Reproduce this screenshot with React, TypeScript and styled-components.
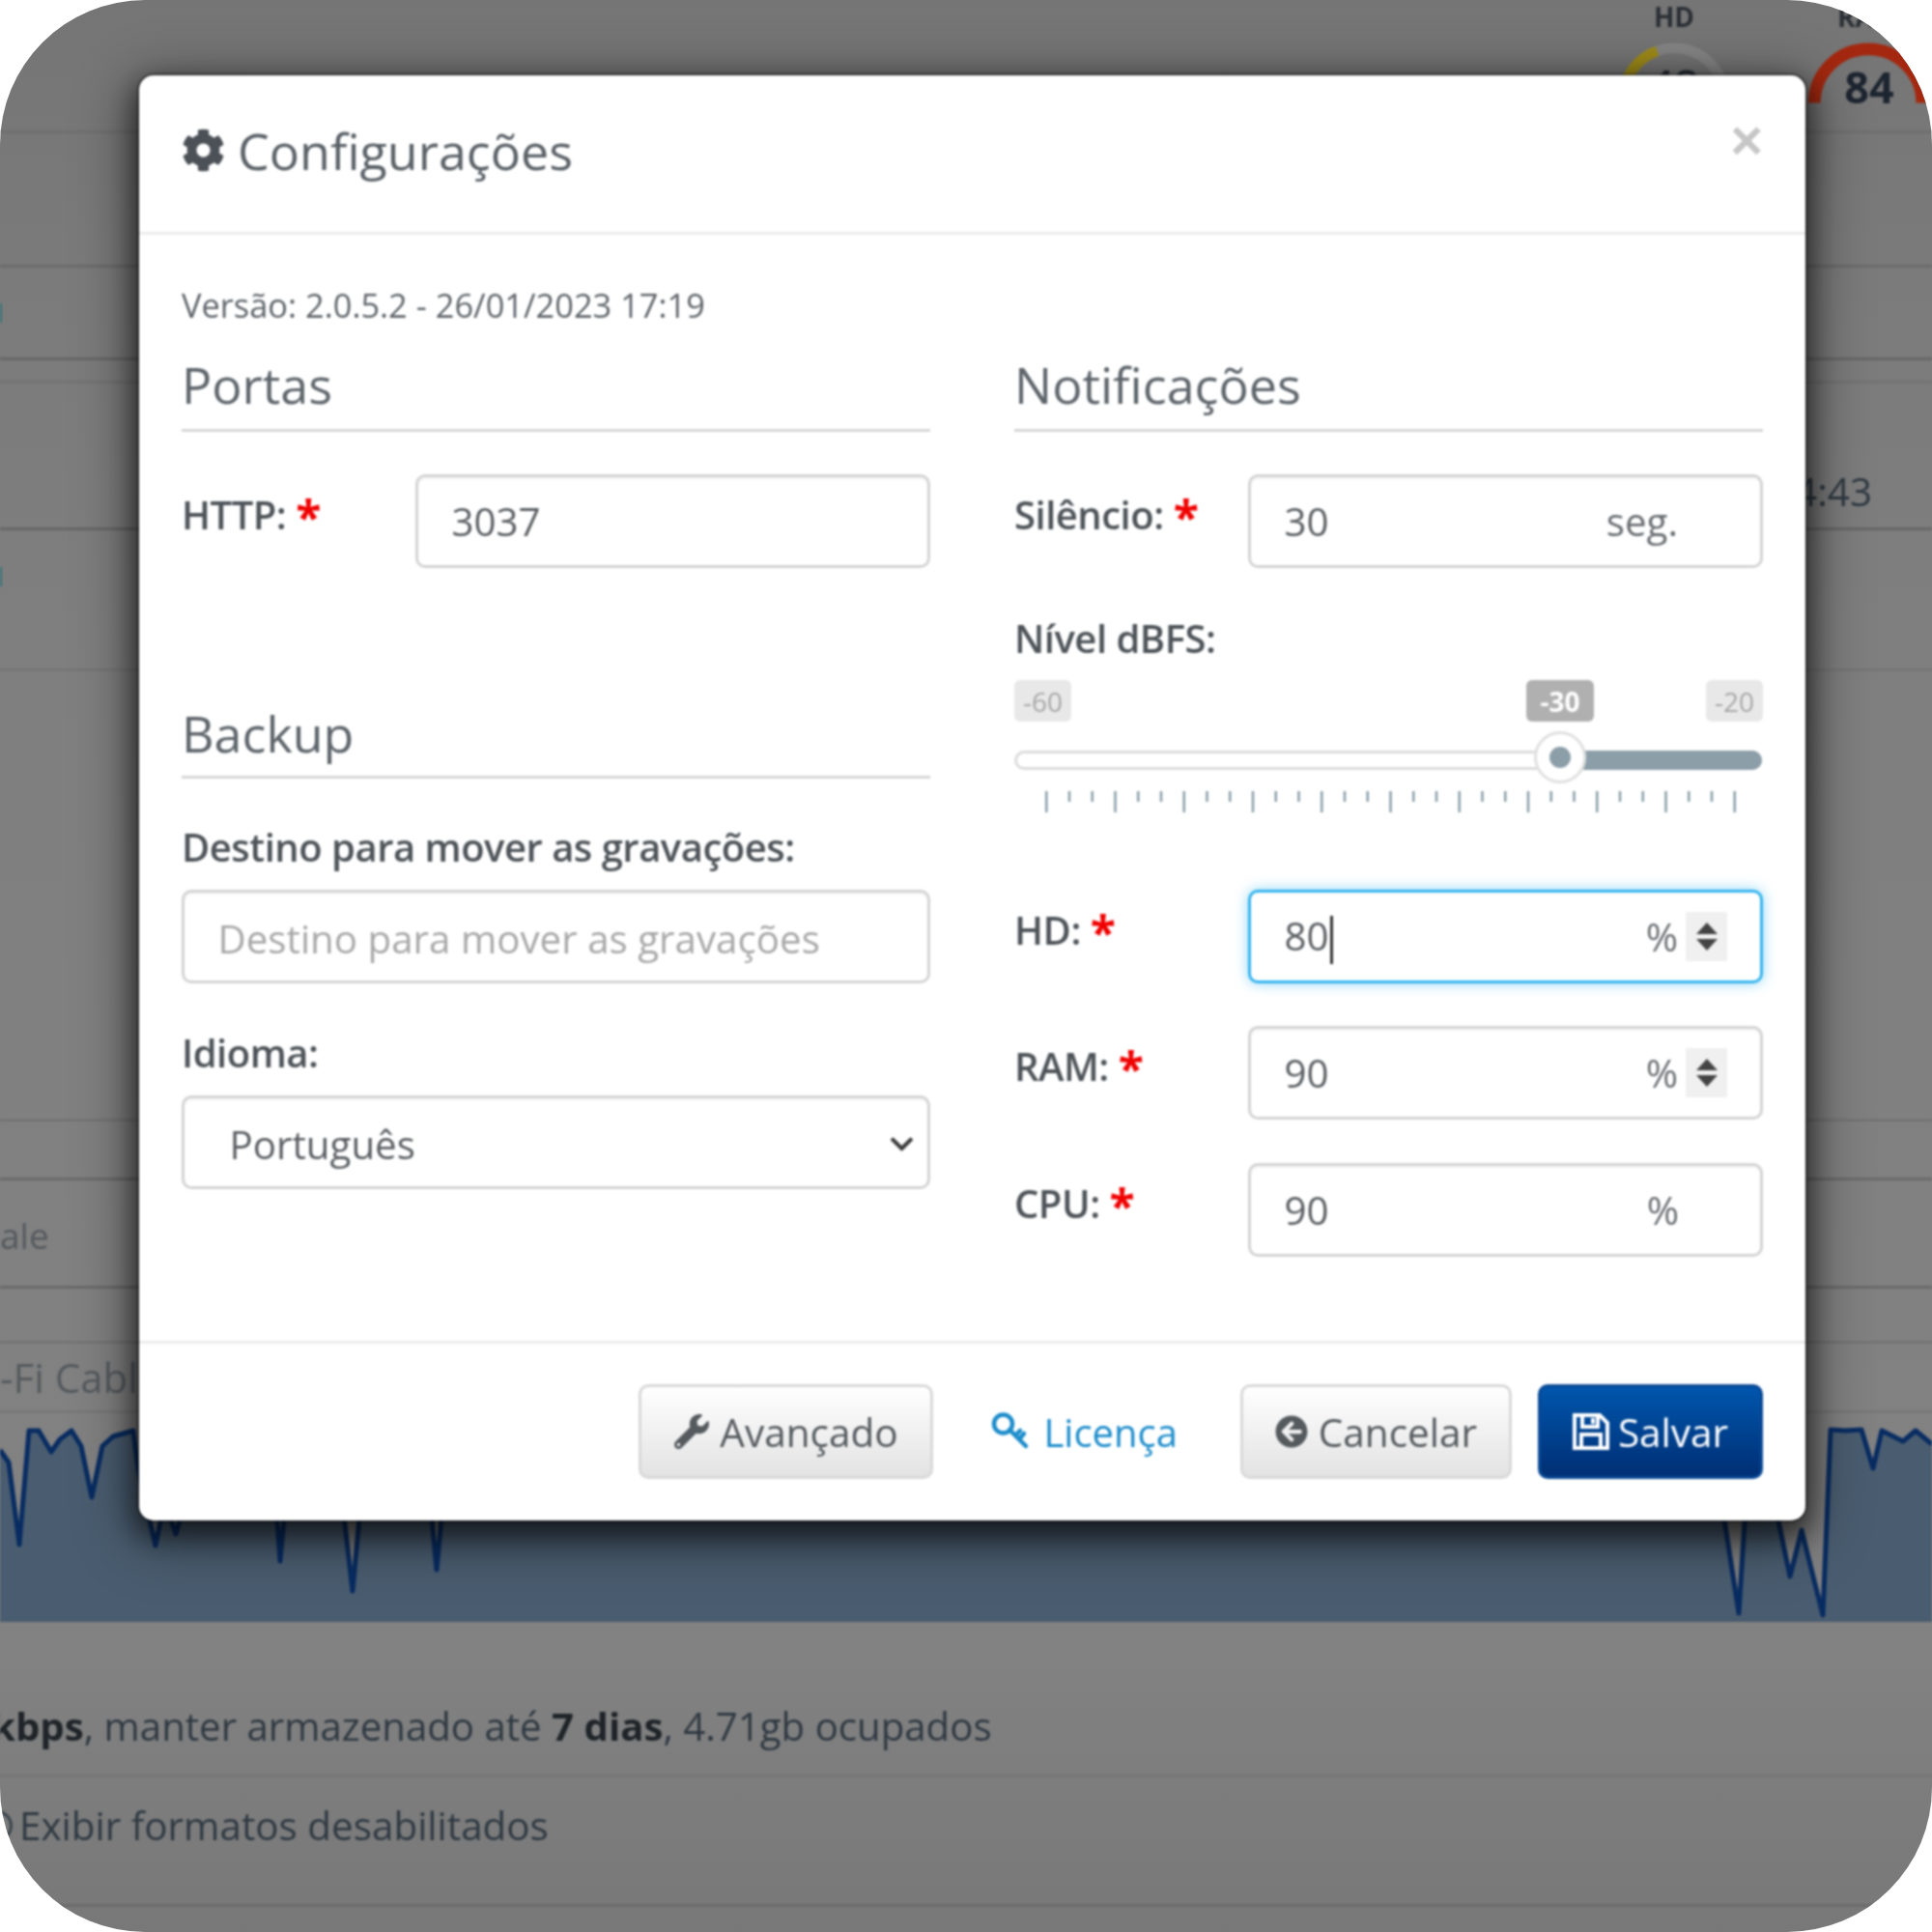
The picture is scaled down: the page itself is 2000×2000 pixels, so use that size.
import React from "react";
import styled, { createGlobalStyle } from "styled-components";
import { FaCog, FaWrench, FaArrowCircleLeft, FaChevronDown } from "react-icons/fa";

const Global = createGlobalStyle`
  html, body { margin: 0; padding: 0; background: #fff; }
  * { box-sizing: border-box; }
`;

const Page = styled.div`
  position: relative;
  width: 2000px;
  height: 2000px;
  overflow: hidden;
  border-radius: 150px;
  background: linear-gradient(180deg, #757575 0, #7b7b7b 300px, #7f7f7f 700px, #828282 1700px, #787878 2000px);
  font-family: "Open Sans", "Liberation Sans", sans-serif;
`;

const Backdrop = styled.div`
  display: flex;
  flex-direction: column;
  width: 2000px;
  filter: blur(0.8px);
`;

const Row = styled.div<{ $h: number; $pt?: number; $pb?: number; $end?: boolean; $line?: string }>`
  height: ${(p) => p.$h}px;
  flex: none;
  display: flex;
  align-items: center;
  justify-content: ${(p) => (p.$end ? "flex-end" : "flex-start")};
  padding-top: ${(p) => p.$pt ?? 0}px;
  padding-bottom: ${(p) => p.$pb ?? 0}px;
  border-bottom: 3px solid ${(p) => p.$line ?? "#6c6c6c"};
  font-size: 40.4px;
  color: #333a42;
  overflow: hidden;
`;

const GaugeRow = styled.div`
  height: 138px;
  flex: none;
  display: flex;
  justify-content: flex-end;
  gap: 77px;
  padding-right: 2px;
  border-bottom: 3px solid #707070;
  overflow: hidden;
`;

const Gauge = styled.div<{ $w: number }>`
  width: ${(p) => p.$w}px;
  display: flex;
  flex-direction: column;
  align-items: center;
`;

const GaugeLabel = styled.div`
  height: 45px;
  font-size: 28px;
  line-height: 34px;
  font-weight: 700;
  color: #2b3036;
  white-space: nowrap;
`;

const Muted = styled.span<{ $size: number }>`
  font-size: ${(p) => p.$size}px;
  color: #555a5e;
  white-space: nowrap;
`;

const Plain = styled.span<{ $left?: number; $right?: number; $size?: number }>`
  white-space: nowrap;
  margin-left: ${(p) => p.$left ?? 0}px;
  margin-right: ${(p) => p.$right ?? 0}px;
  font-size: ${(p) => p.$size ?? 40.4}px;
  color: #2f3942;
  b { font-weight: 700; color: #1f2429; }
`;

const EdgeMark = styled.span`
  width: 2px;
  height: 20px;
  background: #38747a;
`;

const EdgeCheck = styled.span`
  width: 32px;
  height: 32px;
  margin-left: -19px;
  flex: none;
  border: 3px solid #3a444e;
  border-radius: 50%;
`;

const ChartWrap = styled.div`
  height: 216px;
  flex: none;
  svg { display: block; }
`;

const Modal = styled.div`
  position: absolute;
  left: 144px;
  top: 78px;
  width: 1725px;
  height: 1496px;
  display: flex;
  flex-direction: column;
  background: #fff;
  border-radius: 15px;
  box-shadow: 0 0 0 2px rgba(0, 0, 0, 0.4), 0 12px 28px 4px rgba(0, 0, 0, 0.55), 0 14px 60px 8px rgba(0, 0, 0, 0.45);
  color: #555;
  filter: blur(0.8px);
`;

const Header = styled.header`
  height: 165px;
  flex: none;
  display: flex;
  align-items: center;
  padding: 0 44px 7px;
  border-bottom: 3px solid #ececec;
  position: relative;
`;

const Title = styled.h4`
  margin: 0;
  display: flex;
  align-items: center;
  gap: 13px;
  font-size: 52px;
  font-weight: 400;
  color: #5a6167;
  svg { color: #4b5157; }
`;

const Close = styled.span`
  position: absolute;
  right: 44px;
  top: 36px;
  font-size: 58px;
  line-height: 62px;
  font-weight: 700;
  color: #c6c6c6;
  font-family: "Liberation Sans", sans-serif;
`;

const Body = styled.div`
  flex: 1;
  padding: 0 44px;
`;

const Version = styled.div`
  height: 48px;
  margin-top: 49px;
  font-size: 34.4px;
  line-height: 48px;
  color: #5f656a;
`;

const Columns = styled.div`
  display: grid;
  grid-template-columns: 775px 775px;
  column-gap: 87px;
  margin-top: 14px;
`;

const Column = styled.div`
  display: flex;
  flex-direction: column;
`;

const SectionHeading = styled.h3<{ $mt?: number; $mb?: number; $pt?: number }>`
  margin: ${(p) => p.$mt ?? 0}px 0 ${(p) => p.$mb ?? 44}px;
  height: 93px;
  padding-top: ${(p) => p.$pt ?? 16}px;
  line-height: 56px;
  font-size: 52px;
  font-weight: 400;
  color: #5e656b;
  border-bottom: 3px solid #d6d6d6;
`;

const FieldRow = styled.div<{ $mb?: number }>`
  display: grid;
  grid-template-columns: 242px 533px;
  margin-bottom: ${(p) => p.$mb ?? 0}px;
`;

const Label = styled.label<{ $mt?: number }>`
  display: block;
  margin-top: ${(p) => p.$mt ?? 0}px;
  font-size: 40px;
  line-height: 48px;
  font-weight: 600;
  letter-spacing: -0.5px;
  color: #4d5358;
`;

const InlineLabel = styled(Label)`
  padding-top: 18px;
`;

const Required = styled.span`
  position: relative;
  top: 5px;
  margin-left: 10px;
  color: #f00000;
  font-size: 48px;
  line-height: 40px;
  font-weight: 700;
`;

const Frame = styled.div<{ $focus?: boolean; $mt?: number; $pt?: number }>`
  height: 97px;
  margin-top: ${(p) => p.$mt ?? 0}px;
  display: flex;
  align-items: center;
  padding: ${(p) => p.$pt ?? 0}px 28px 0 34.5px;
  background: #fff;
  border: 3px solid ${(p) => (p.$focus ? "#35b4ee" : "#d4d4d4")};
  border-radius: 10px;
  box-shadow: ${(p) => (p.$focus ? "0 0 14px rgba(53, 180, 238, 0.55)" : "inset 0 2px 2px rgba(0,0,0,.05)")};
  font-size: 40.3px;
  color: #5b5f63;
`;

const Value = styled.span<{ $inset?: number; $placeholder?: boolean }>`
  flex: 1;
  margin-left: ${(p) => p.$inset ?? 0}px;
  white-space: nowrap;
  color: ${(p) => (p.$placeholder ? "#a8a8a8" : "#5b5f63")};
`;

const Caret = styled.i`
  display: inline-block;
  width: 3px;
  height: 50px;
  margin-left: 1px;
  vertical-align: middle;
  background: #333;
`;

const Suffix = styled.span<{ $right?: number }>`
  margin-right: ${(p) => p.$right ?? 57}px;
  color: #6a6e72;
`;

const Spinner = styled.span`
  width: 43px;
  height: 51px;
  margin-left: 8px;
  margin-right: 6px;
  display: flex;
  flex-direction: column;
  align-items: center;
  justify-content: center;
  gap: 5px;
  background: #f0f0f0;
`;

const ArrowUp = styled.i`
  width: 0;
  height: 0;
  border-left: 11px solid transparent;
  border-right: 11px solid transparent;
  border-bottom: 12px solid #444;
`;

const ArrowDown = styled(ArrowUp)`
  border-bottom: 0;
  border-top: 12px solid #444;
`;

const SelectArrow = styled.span`
  color: #3d3d3d;
  display: flex;
  margin-right: -15px;
`;

const SliderBox = styled.div`
  position: relative;
  height: 170px;
  margin-top: 19px;
  margin-bottom: 47px;
`;

const Tags = styled.div`
  display: flex;
  justify-content: space-between;
`;

const Tag = styled.span<{ $on?: boolean; $w: number; $mr?: number }>`
  width: ${(p) => p.$w}px;
  height: 43px;
  margin-right: ${(p) => p.$mr ?? 0}px;
  display: flex;
  align-items: center;
  justify-content: center;
  border-radius: 6px;
  font-size: 28px;
  font-weight: ${(p) => (p.$on ? 700 : 400)};
  color: ${(p) => (p.$on ? "#fff" : "#a7a7a7")};
  background: ${(p) => (p.$on ? "#b0b0b0" : "#e8e8e8")};
`;

const Track = styled.div`
  display: flex;
  height: 20px;
  margin-top: 30px;
  margin-right: 1px;
  border: 3px solid #dcdcdc;
  border-radius: 10px;
  background: #fff;
  justify-content: flex-end;
`;

const TrackFill = styled.div`
  width: 207px;
  margin: -3px;
  border-radius: 0 10px 10px 0;
  background: #8c9ea8;
`;

const Handle = styled.span`
  position: absolute;
  left: 538px;
  top: 53px;
  width: 54px;
  height: 54px;
  display: flex;
  align-items: center;
  justify-content: center;
  background: #fff;
  border: 3px solid #e0e0e0;
  border-radius: 50%;
  &::after {
    content: "";
    width: 22px;
    height: 22px;
    border-radius: 50%;
    background: #8c9ea8;
  }
`;

const Ticks = styled.svg`
  display: block;
  margin-top: 22px;
`;

const Footer = styled.footer`
  height: 186px;
  flex: none;
  display: flex;
  align-items: center;
  justify-content: flex-end;
  padding: 0 44px 1px;
  border-top: 3px solid #ececec;
`;

const Button = styled.button<{ $w: number; $mr?: number; $primary?: boolean; $gap?: number }>`
  width: ${(p) => p.$w}px;
  height: 98px;
  margin-right: ${(p) => p.$mr ?? 0}px;
  display: flex;
  align-items: center;
  justify-content: center;
  gap: ${(p) => p.$gap ?? 11}px;
  padding: 0;
  font-family: inherit;
  font-size: 40.5px;
  border-radius: 10px;
  color: ${(p) => (p.$primary ? "#fff" : "#555a5e")};
  border: 3px solid ${(p) => (p.$primary ? "#0a4a96" : "#d9d9d9")};
  background: ${(p) =>
    p.$primary
      ? "linear-gradient(180deg, #0056ad 0%, #002f74 100%)"
      : "linear-gradient(180deg, #ffffff 0%, #e3e3e3 100%)"};
`;

const LinkButton = styled.a`
  display: flex;
  align-items: center;
  gap: 13px;
  margin-right: 65px;
  font-size: 40px;
  color: #1b8ccb;
`;

const KeyIcon = () => (
  <svg width="41" height="40" viewBox="0 0 41 40" fill="none" stroke="#1b8ccb" strokeWidth="4.5">
    <circle cx="12.5" cy="12" r="9.5" />
    <path d="M19 18 L36 35 M29 28 L34 22 M25 24 L30 19" strokeLinecap="round" />
  </svg>
);

const SaveIcon = () => (
  <svg width="38" height="38" viewBox="0 0 38 38" fill="none" stroke="#fff" strokeWidth="4">
    <path d="M2 2 H28 L36 10 V36 H2 Z" />
    <path d="M10 2 V14 H26 V2" />
    <path d="M9 36 V22 H29 V36" />
    <path d="M21 5 V11" />
  </svg>
);

const ticks: { x: number; major: boolean }[] = [];
for (let i = 0; i <= 30; i++) ticks.push({ x: 32 + i * 23.75, major: i % 3 === 0 });

const chartLine =
  "M0 1501 L9 1514 L20 1599 L30 1481 L40 1481 L53 1503 L62 1490 L74 1481 L84 1497 L95 1550 L106 1497 L117 1487 L138 1481 L143 1520 L161 1600 L167 1570 L176 1570 L182 1588 L187 1570 L286 1560 L290 1616 L295 1560 L355 1560 L365 1647 L373 1560 L446 1560 L452 1625 L458 1560 L1783 1560 L1800 1670 L1807 1560 L1838 1560 L1853 1632 L1865 1584 L1887 1672 L1895 1480 L1910 1481 L1927 1480 L1939 1520 L1948 1481 L1970 1492 L1983 1481 L2000 1495";

export default function App() {
  return (
    <>
      <Global />
      <Page>
        <Backdrop>
          <GaugeRow>
            <Gauge $w={120}>
              <GaugeLabel>HD</GaugeLabel>
              <svg width="120" height="93" viewBox="0 0 120 93">
                <path d="M6 60 A54 54 0 1 1 114 60" fill="none" stroke="#868686" strokeWidth="11" />
                <path d="M6 60 A54 54 0 0 1 42 9" fill="none" stroke="#a08c18" strokeWidth="11" />
                <text x="60" y="62" textAnchor="middle" fontSize="46" fontWeight="600" fill="#222a33">48</text>
              </svg>
            </Gauge>
            <Gauge $w={128}>
              <GaugeLabel>RAM</GaugeLabel>
              <svg width="128" height="93" viewBox="0 0 128 93">
                <path d="M7 64 A57 57 0 0 1 121 64" fill="none" stroke="#a4280f" strokeWidth="13" />
                <text x="65" y="64" textAnchor="middle" fontSize="46" fontWeight="700" fill="#1d2530">84</text>
              </svg>
            </Gauge>
          </GaugeRow>
          <Row $h={139} />
          <Row $h={96} $line="#676767">
            <EdgeMark />
          </Row>
          <Row $h={24} $line="#747474" />
          <Row $h={152} $pt={74} $end $line="#676767">
            <Plain $right={62}>14:43</Plain>
          </Row>
          <Row $h={146} $pb={48} $line="#777777">
            <EdgeMark />
          </Row>
          <Row $h={466} $line="#747474" />
          <Row $h={61} $line="#6a6a6a" />
          <Row $h={112} $pt={4} $line="#6a6a6a">
            <Muted $size={37}>ale</Muted>
          </Row>
          <Row $h={57} $line="#747474" />
          <Row $h={72} $line="#787878">
            <Muted $size={42}>-Fi Cable</Muted>
          </Row>
          <ChartWrap>
            <svg width="2000" height="216" viewBox="0 1463 2000 216">
              <path d={`${chartLine} L2000 1679 L0 1679 Z`} fill="#4a5d70" />
              <path d={chartLine} fill="none" stroke="#082c62" strokeWidth="5" strokeLinejoin="round" />
            </svg>
          </ChartWrap>
          <Row $h={161} $pt={56} $line="#767676">
            <Plain $left={-9} $size={40.2}>
              <b>kbps</b>, manter armazenado até <b>7 dias</b>, 4.71gb ocupados
            </Plain>
          </Row>
          <Row $h={134} $pb={32} $line="#6c6c6c">
            <EdgeCheck />
            <Plain $left={7}>Exibir formatos desabilitados</Plain>
          </Row>
        </Backdrop>

        <Modal>
          <Header>
            <Title>
              <FaCog size={45} />
              Configurações
            </Title>
            <Close>×</Close>
          </Header>
          <Body>
            <Version>Versão: 2.0.5.2 - 26/01/2023 17:19</Version>
            <Columns>
              <Column>
                <SectionHeading>Portas</SectionHeading>
                <FieldRow>
                  <InlineLabel>
                    HTTP:<Required>*</Required>
                  </InlineLabel>
                  <Frame>
                    <Value>3037</Value>
                  </Frame>
                </FieldRow>
                <SectionHeading $mt={125} $mb={47} $pt={18}>Backup</SectionHeading>
                <Label>Destino para mover as gravações:</Label>
                <Frame $mt={20} $pt={4}>
                  <Value $placeholder>Destino para mover as gravações</Value>
                </Frame>
                <Label $mt={48}>Idioma:</Label>
                <Frame $mt={20} $pt={4}>
                  <Value $inset={12}>Português</Value>
                  <SelectArrow>
                    <FaChevronDown size={27} />
                  </SelectArrow>
                </Frame>
              </Column>
              <Column>
                <SectionHeading>Notificações</SectionHeading>
                <FieldRow>
                  <InlineLabel>
                    Silêncio:<Required>*</Required>
                  </InlineLabel>
                  <Frame>
                    <Value>30</Value>
                    <Suffix>seg.</Suffix>
                  </Frame>
                </FieldRow>
                <Label $mt={49}>Nível dBFS:</Label>
                <SliderBox>
                  <Tags>
                    <Tag $w={59} $mr={471}>-60</Tag>
                    <Tag $on $w={70} $mr={116}>-30</Tag>
                    <Tag $w={59}>-20</Tag>
                  </Tags>
                  <Track>
                    <TrackFill />
                  </Track>
                  <Handle />
                  <Ticks width="775" height="24" viewBox="0 0 775 24">
                    {ticks.map((t) => (
                      <rect key={t.x} x={t.x} y={0} width={2.5} height={t.major ? 22 : 11} fill="#8a9ea8" />
                    ))}
                  </Ticks>
                </SliderBox>
                <FieldRow $mb={44}>
                  <InlineLabel>
                    HD:<Required>*</Required>
                  </InlineLabel>
                  <Frame $focus>
                    <Value>
                      80
                      <Caret />
                    </Value>
                    <Suffix $right={0}>%</Suffix>
                    <Spinner>
                      <ArrowUp />
                      <ArrowDown />
                    </Spinner>
                  </Frame>
                </FieldRow>
                <FieldRow $mb={45}>
                  <InlineLabel>
                    RAM:<Required>*</Required>
                  </InlineLabel>
                  <Frame>
                    <Value>90</Value>
                    <Suffix $right={0}>%</Suffix>
                    <Spinner>
                      <ArrowUp />
                      <ArrowDown />
                    </Spinner>
                  </Frame>
                </FieldRow>
                <FieldRow>
                  <InlineLabel>
                    CPU:<Required>*</Required>
                  </InlineLabel>
                  <Frame>
                    <Value>90</Value>
                    <Suffix $right={56}>%</Suffix>
                  </Frame>
                </FieldRow>
              </Column>
            </Columns>
          </Body>
          <Footer>
            <Button $w={305} $mr={60}>
              <FaWrench size={36} />
              Avançado
            </Button>
            <LinkButton>
              <KeyIcon />
              Licença
            </LinkButton>
            <Button $w={281} $mr={27}>
              <FaArrowCircleLeft size={34} />
              Cancelar
            </Button>
            <Button $w={233} $primary $gap={9}>
              <SaveIcon />
              Salvar
            </Button>
          </Footer>
        </Modal>
      </Page>
    </>
  );
}
